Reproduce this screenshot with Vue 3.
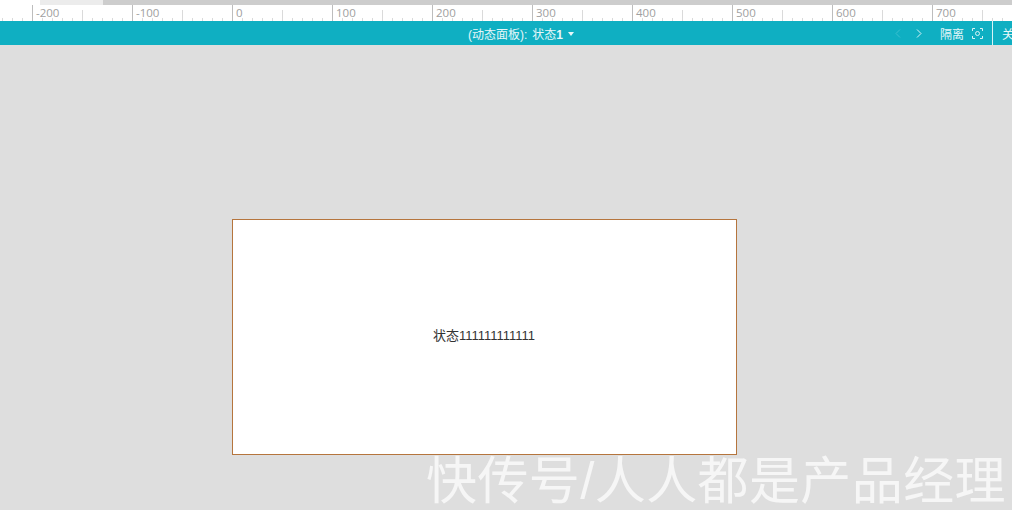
<script setup>
// Ruler labels, one per 100px segment
const marks = [-300, -200, -100, 0, 100, 200, 300, 400, 500, 600, 700, 800]
</script>

<template>
  <div class="page">
    <div class="scrollbar">
      <div class="blank"></div>
      <div class="thumb"></div>
      <div class="track"></div>
    </div>

    <div class="ruler">
      <div v-for="mark in marks" :key="mark" class="segment">
        <span class="label">{{ mark }}</span>
      </div>
    </div>

    <div class="toolbar">
      <div class="state">
        <span>(动态面板):</span>
        <span class="state-name">状态<b>1</b></span>
        <span class="caret"></span>
      </div>
      <div class="actions">
        <svg class="arrow" width="6" height="9" viewBox="0 0 6 9">
          <path d="M5 .5 1 4.5l4 4" fill="none" stroke="#3fbfcf" stroke-width="1" />
        </svg>
        <svg class="arrow next" width="6" height="9" viewBox="0 0 6 9">
          <path d="M1 .5l4 4-4 4" fill="none" stroke="#d8f3f6" stroke-width="1" />
        </svg>
        <span class="isolate">隔离</span>
        <svg class="focus" width="11" height="11" viewBox="0 0 11 11">
          <path d="M.5 3V.5H3M8 .5h2.500V3M10.500 8v2.500H8M3 10.500H.5V8" fill="none" stroke="#d8f3f6" stroke-width="1" />
          <circle cx="5.500" cy="5.500" r="2" fill="none" stroke="#d8f3f6" stroke-width="1" />
        </svg>
        <span class="divider"></span>
        <span class="close">关闭</span>
      </div>
    </div>

    <div class="canvas">
      <div class="panel">状态111111111111</div>
    </div>

    <div class="watermark">快传号/人人都是产品经理</div>
  </div>
</template>

<style>
html,
body {
  margin: 0;
  overflow: hidden;
}
</style>

<style scoped>
.page {
  position: relative;
  width: 1012px;
  height: 510px;
  overflow: hidden;
  background: #dedede;
  font-family: "Liberation Sans", "Noto Sans CJK SC", sans-serif;
}

.scrollbar {
  display: flex;
  height: 5px;
}

.blank {
  width: 40px;
  background: #fff;
}

.thumb {
  width: 63px;
  background: #ececec;
}

.track {
  flex: 1;
  background: #cdcdcd;
}

.ruler {
  display: flex;
  height: 16px;
  margin-left: -68px;
  background: #fff;
}

.segment {
  flex: 0 0 100px;
  box-sizing: border-box;
  height: 16px;
  padding-left: 3px;
  border-left: 1px solid #bdbdbd;
  background-image:
    linear-gradient(#dadada, #dadada),
    repeating-linear-gradient(to right, transparent 0 9px, #dadada 9px 10px);
  background-size: 1px 11px, 100% 3px;
  background-position: 49px 100%, 0 100%;
  background-repeat: no-repeat;
}

.label {
  display: block;
  font-family: "Open Sans", sans-serif;
  font-size: 11.500px;
  line-height: 15px;
  color: #a0a0a0;
}

.toolbar {
  position: relative;
  display: flex;
  justify-content: center;
  align-items: center;
  height: 24px;
  background: #0fafc2;
  color: #e6f7f9;
  font-size: 12px;
}

.state {
  display: flex;
  align-items: center;
  margin-left: 30px;
}

.state-name {
  margin-left: 5px;
}

.caret {
  width: 0;
  height: 0;
  margin: 1px 0 0 5px;
  border-left: 3.500px solid transparent;
  border-right: 3.500px solid transparent;
  border-top: 4px solid #e6f7f9;
}

.actions {
  position: absolute;
  top: 0;
  left: 895px;
  display: flex;
  align-items: center;
  width: max-content;
  height: 24px;
  white-space: nowrap;
}

.actions > * {
  flex: none;
}

.arrow.next {
  margin-left: 15px;
}

.isolate {
  margin-left: 18px;
}

.focus {
  margin-left: 8px;
}

.divider {
  width: 1px;
  height: 24px;
  margin-left: 9px;
  background: #d8f3f6;
}

.close {
  margin-left: 9px;
}

.canvas {
  padding: 174px 0 0 232px;
}

.panel {
  box-sizing: border-box;
  display: flex;
  align-items: center;
  justify-content: center;
  width: 505px;
  height: 236px;
  padding: 0 1px 6px 0;
  border: 1px solid #b5753d;
  background: #fff;
  font-size: 13px;
  color: #333;
}

.watermark {
  position: absolute;
  left: 426px;
  top: 450px;
  font-size: 51px;
  line-height: 64px;
  letter-spacing: 0.400px;
  white-space: nowrap;
  color: #f6f6f6;
}
</style>
